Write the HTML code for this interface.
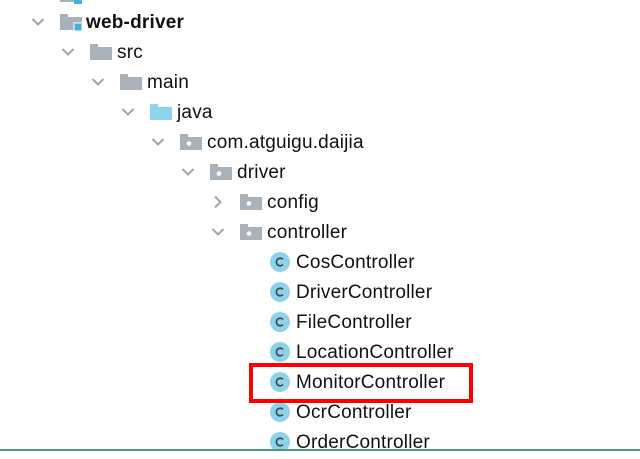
<!DOCTYPE html>
<html><head><meta charset="utf-8"><style>
body{margin:0;width:640px;height:459px;background:#fff;overflow:hidden;position:relative;font-family:"Liberation Sans",sans-serif;}
.r{position:absolute;height:30px;line-height:30px;font-size:19px;color:#111;white-space:nowrap;letter-spacing:0.2px}
.i{position:absolute}
.line{position:absolute;left:0;top:449px;width:640px;height:2px;background:#4a9a78}
.cover{position:absolute;left:0;top:451px;width:640px;height:8px;background:#fff}
.box{position:absolute;left:249px;top:363px;width:216px;height:32px;border:4px solid #f00}
</style></head><body>
<svg class="i" style="left:60px;top:-10px" width="24" height="16"><rect x="0" y="0" width="20" height="12" fill="#aab2b9"/><rect x="14" y="6" width="8" height="8" fill="#3fb0e0"/></svg>
<div id="t"></div>
<script>
var rows=[
[0,'web-driver','mod','v'],[1,'src','f','v'],[2,'main','f','v'],[3,'java','j','v'],
[4,'com.atguigu.daijia','p','v'],[5,'driver','p','v'],[6,'config','p','>'],[6,'controller','p','v'],
[7,'CosController','c'],[7,'DriverController','c'],[7,'FileController','c'],[7,'LocationController','c'],
[7,'MonitorController','c'],[7,'OcrController','c'],[7,'OrderController','c']];
var h='';
rows.forEach(function(r,k){
 var L=r[0],cy=22+30*k,fx=60+30*L,tx=87+30*L;
 if(r[3]){var cx=38+30*L;
  if(r[3]=='v')h+='<svg class="i" style="left:'+(cx-7)+'px;top:'+(cy-5)+'px" width="14" height="10"><path d="M1.5 2 L7 7.5 L12.5 2" stroke="#a5a5a5" stroke-width="2" fill="none"/></svg>';
  else h+='<svg class="i" style="left:'+(cx-5)+'px;top:'+(cy-7)+'px" width="10" height="14"><path d="M2 1.5 L7.5 7 L2 12.5" stroke="#a5a5a5" stroke-width="2" fill="none"/></svg>';}
 var t=r[2];
 if(t=='c'){h+='<svg class="i" style="left:270px;top:'+(cy-10)+'px" width="20" height="20"><circle cx="10" cy="10" r="10" fill="#8bd2ea"/><path d="M13 7.5 A3.8 3.8 0 1 0 13 12.5" stroke="#444" stroke-width="1.6" fill="none"/></svg>';
  h+='<div class="r" style="left:296px;top:'+(cy-14)+'px">'+r[1]+'</div>';}
 else{var col=t=='j'?'#8fd3ec':'#aab2b9';
  h+='<svg class="i" style="left:'+fx+'px;top:'+(cy-8)+'px" width="24" height="18"><path d="M0 0 H8 V3 H22 V16 H0 Z" fill="'+col+'"/>'+(t=='p'?'<circle cx="9" cy="9.5" r="2.3" fill="#fff"/>':'')+(t=='mod'?'<rect x="14" y="9" width="8" height="8" fill="#3fb0e0" stroke="#fff" stroke-width="1"/>':'')+'</svg>';
  h+='<div class="r" style="left:'+(t=='mod'?86:tx)+'px;top:'+(cy-14)+'px;'+(t=='mod'?'font-weight:bold':'')+'">'+r[1]+'</div>';}
});
document.getElementById('t').innerHTML=h;
</script>
<div class="box"></div>
<div class="line"></div><div class="cover"></div>
</body></html>
